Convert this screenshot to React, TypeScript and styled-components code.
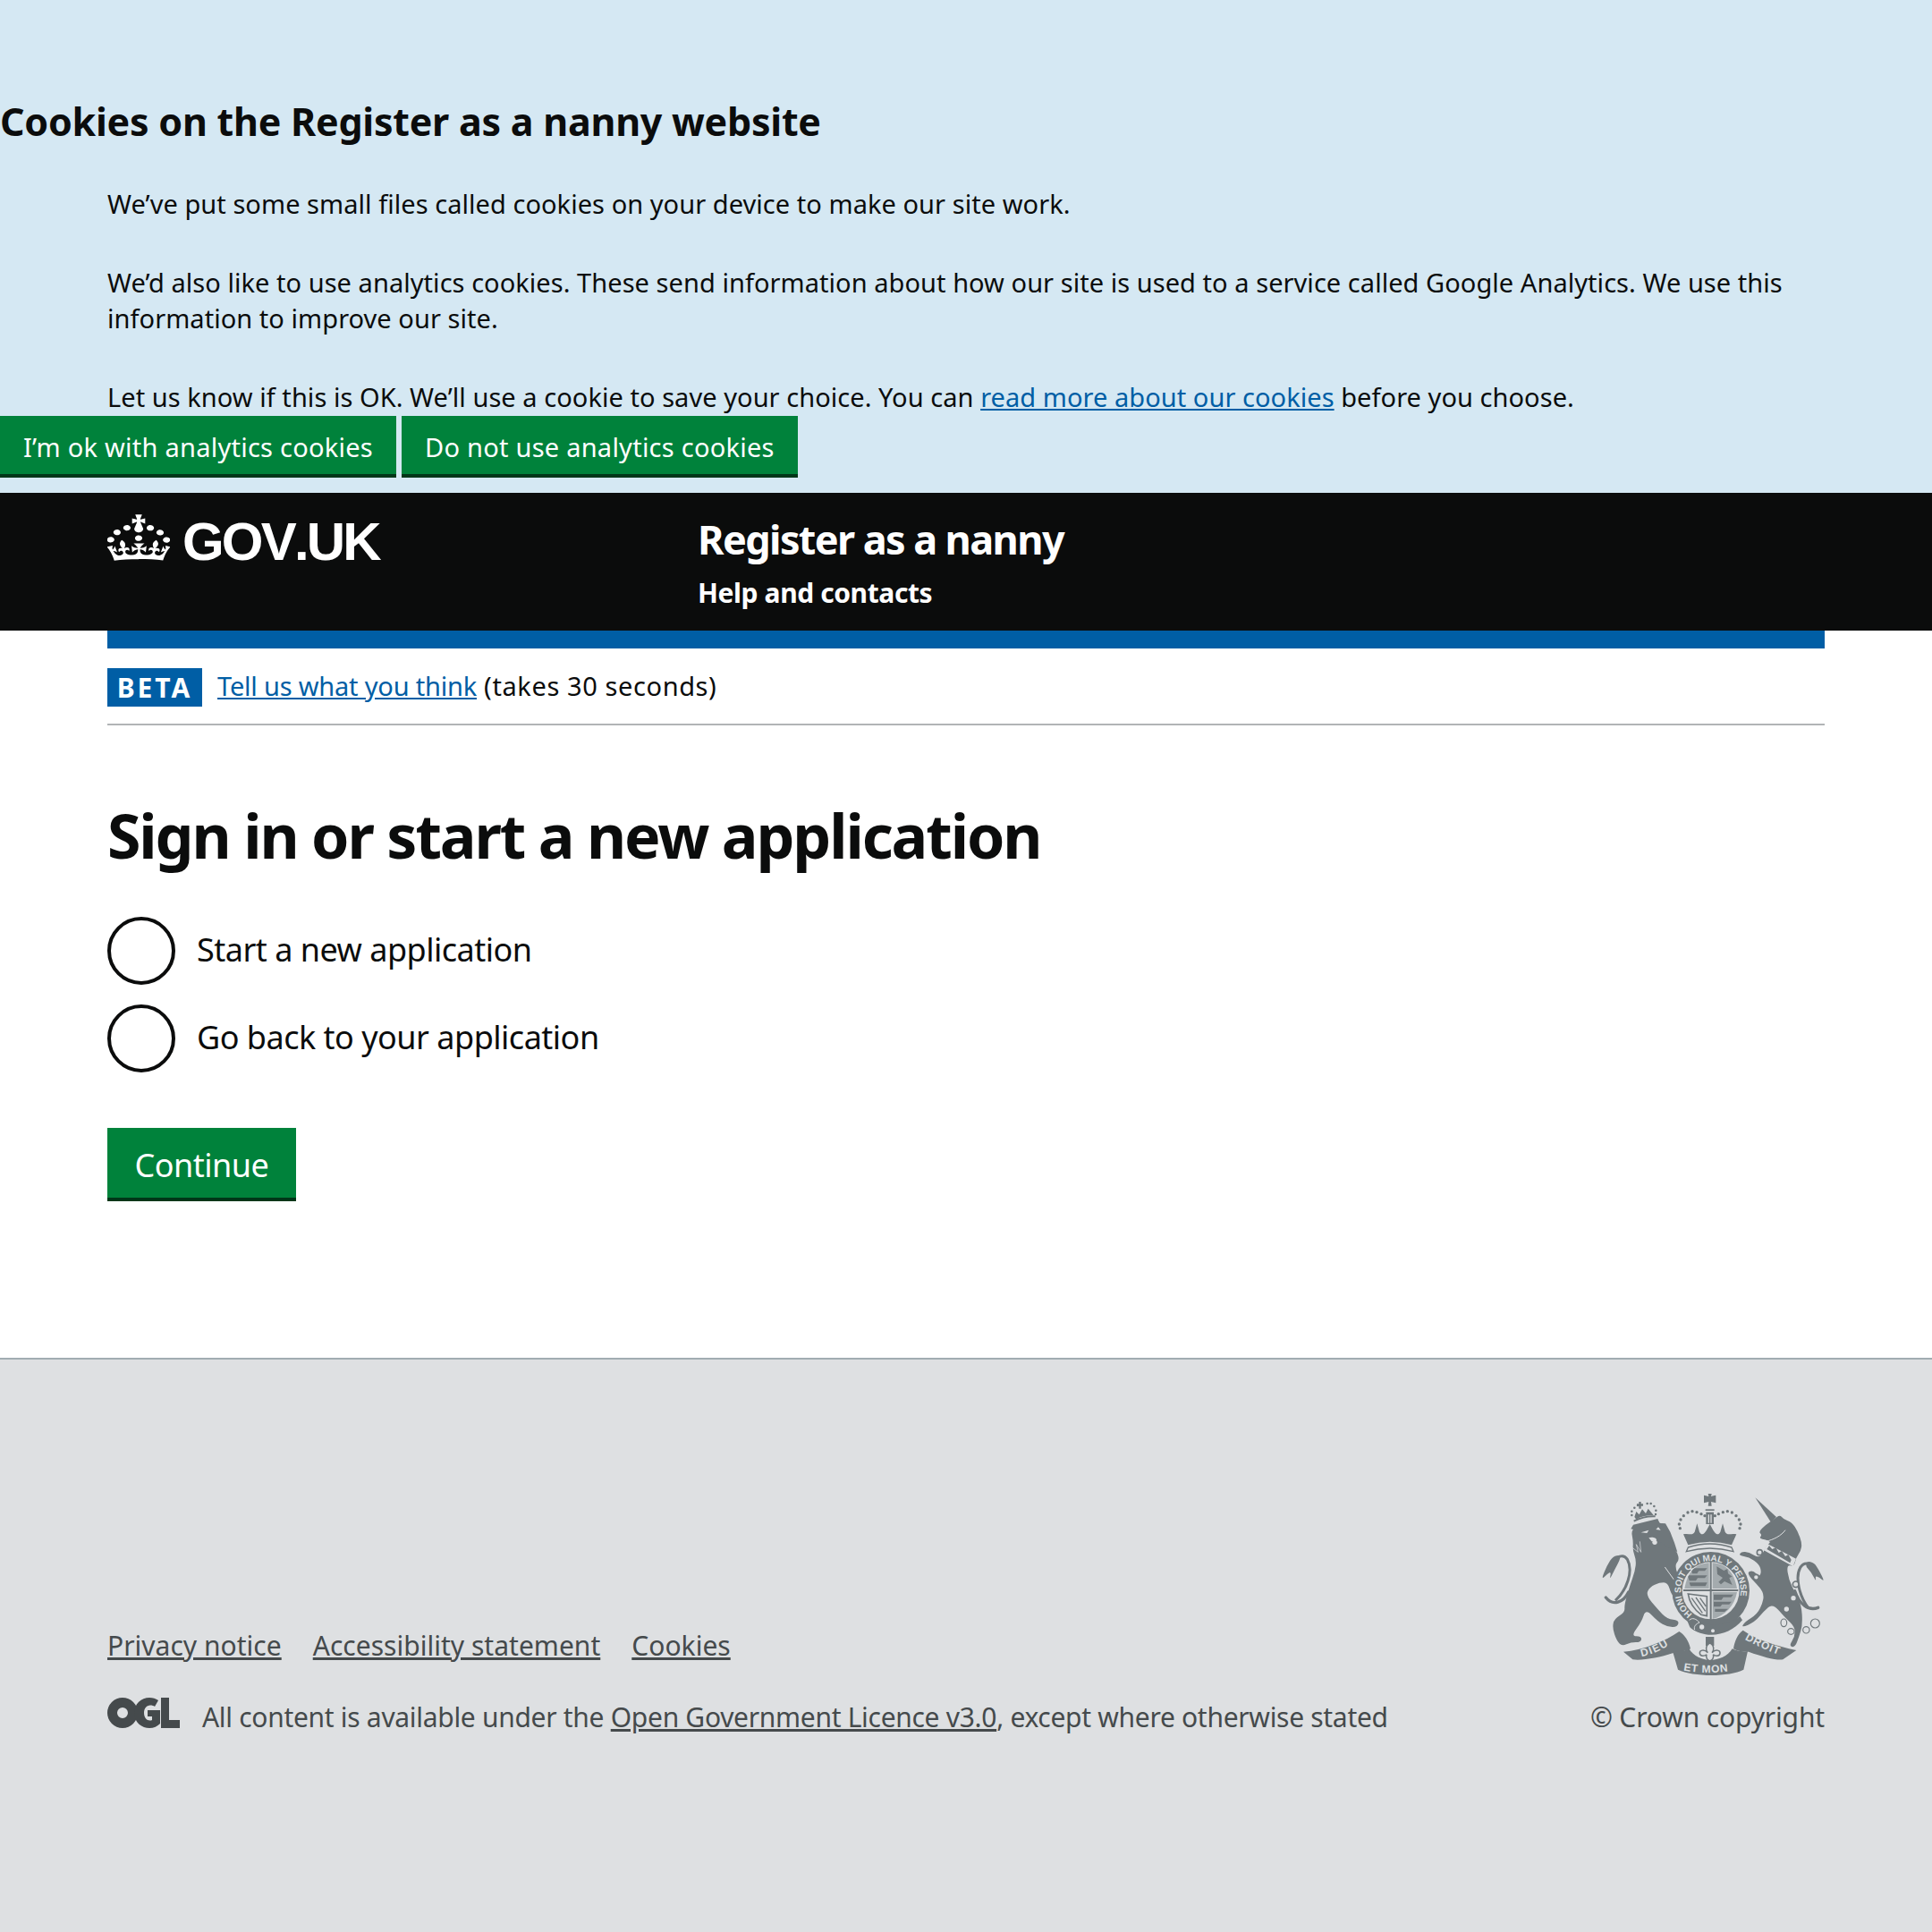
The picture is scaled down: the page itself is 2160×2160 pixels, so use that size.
import React from 'react';
import styled, { createGlobalStyle } from 'styled-components';

const Global = createGlobalStyle`
  html, body { margin: 0; padding: 0; background: #fff; }
  body { font-family: "Noto Sans", sans-serif; color: #0b0c0c; }
  * { box-sizing: border-box; }
`;
const Page = styled.div`display:flex;flex-direction:column;min-height:2160px;`;
const Banner = styled.section`background:#d5e8f3;height:551px;padding-top:104px;`;
const BannerTitle = styled.h2`margin:0 0 40px;font-size:43px;line-height:64px;font-weight:700;letter-spacing:-0.25px;`;
const BannerBody = styled.div`margin:0 120px;display:flex;flex-direction:column;gap:48px;`;
const BodyText = styled.p`margin:0;font-size:29px;line-height:40px;letter-spacing:0.05px;`;
const BlueLink = styled.a`color:#005ea5;text-decoration:underline;`;
const ButtonRow = styled.div`display:flex;gap:6px;margin-top:1px;`;
const GreenButton = styled.button<{$big?:boolean}>`
  font-family:inherit;border:0;border-radius:0;background:#00823b;color:#fff;
  box-shadow:0 4px 0 #003618;
  height:${p=>p.$big?78:65}px;margin-bottom:4px;
  padding:4px ${p=>p.$big?30.5:26}px 0;
  font-size:${p=>p.$big?36:29}px;letter-spacing:${p=>p.$big?-0.5:0.25}px;
`;
const Header = styled.header`background:#0b0c0c;height:154px;padding:0 120px;display:flex;`;
const LogoCol = styled.a`width:660px;height:100px;display:flex;align-items:flex-start;gap:14px;padding-top:24px;color:#fff;text-decoration:none;`;
const LogoText = styled.span`font-family:"Liberation Sans",sans-serif;font-weight:700;font-size:60px;line-height:52px;letter-spacing:-2.8px;font-kerning:none;margin-top:5px;`;
const ServiceCol = styled.div`display:flex;flex-direction:column;color:#fff;padding-top:26px;`;
const ServiceName = styled.a`font-size:45px;line-height:52px;font-weight:700;letter-spacing:-1.6px;`;
const ServiceNav = styled.a`font-size:30px;line-height:40px;margin-top:14px;font-weight:700;letter-spacing:-0.4px;`;
const Container = styled.div`margin:0 120px;`;
const BlueBar = styled.div`height:20px;background:#005ea5;`;
const Phase = styled.div`display:flex;align-items:center;gap:17px;height:86px;border-bottom:2px solid #b1b4b6;padding-top:2px;`;
const Tag = styled.strong`background:#005ea5;color:#fff;width:106px;height:43px;display:flex;align-items:center;justify-content:center;font-size:30px;letter-spacing:3px;font-weight:700;`;
const PhaseText = styled(BodyText)`letter-spacing:0.6px;margin-bottom:2px;`;
const PhaseLink = styled(BlueLink)`letter-spacing:-0.2px;`;
const Main = styled.main`padding-top:83px;height:707px;`;
const Title = styled.h1`margin:0 0 51px;font-size:68px;line-height:80px;font-weight:700;letter-spacing:-2.1px;`;
const Radios = styled.div`display:flex;flex-direction:column;gap:22px;`;
const RadioRow = styled.label`display:flex;align-items:center;gap:24px;height:76px;font-size:36px;letter-spacing:-0.5px;`;
const RadioCircle = styled.span`width:76px;height:76px;border-radius:50%;border:4px solid #0b0c0c;background:#fff;`;
const RadioText = styled.span`margin-bottom:3px;`;
const ContinueWrap = styled.div`margin-top:62px;`;
const Footer = styled.footer`flex:1;background:#dee0e2;border-top:2px solid #a1acb2;padding:150px 120px 0;color:#454a4c;`;
const FooterInner = styled.div`display:flex;justify-content:space-between;align-items:flex-end;`;
const FooterLeft = styled.div`display:flex;flex-direction:column;gap:40px;`;
const FooterLinks = styled.div`display:flex;gap:35px;font-size:30px;line-height:40px;letter-spacing:0.02px;`;
const FooterLink = styled.a`color:#454a4c;text-decoration:underline;`;
const Licence = styled.div`display:flex;align-items:flex-start;gap:25px;height:40px;font-size:30px;line-height:40px;letter-spacing:-0.3px;`;
const OglMark = styled.svg`margin-top:-2px;flex:none;`;
const FooterRight = styled.div`display:flex;flex-direction:column;align-items:flex-end;gap:27px;font-size:30px;line-height:40px;letter-spacing:-0.15px;`;
const CrestSvg = styled.svg`display:block;`;

const Crown = () => (
  <svg width="70" height="52" viewBox="0.2 -0.2 31.6 30.4" preserveAspectRatio="none" fill="currentColor">
    <path fillRule="evenodd" d="M22.6 10.4c-1 .4-2-.1-2.4-1-.4-.9.1-2 1-2.4.9-.4 2 .1 2.4 1s-.1 2-1 2.4m-5.9 6.7c-.9.4-2-.1-2.4-1-.4-.9.1-2 1-2.4.9-.4 2 .1 2.4 1s-.1 2-1 2.4m10.8-3.7c-1 .4-2-.1-2.4-1-.4-.9.1-2 1-2.4.9-.4 2 .1 2.4 1s0 2-1 2.4m3.3 4.8c-1 .4-2-.1-2.4-1-.4-.9.1-2 1-2.4.9-.4 2 .1 2.4 1s-.1 2-1 2.4M17 4.7l2.3 1.2V2.5l-2.3.7-.2-.2.9-3h-3.4l.9 3-.2.2c-.1.1-2.3-.7-2.3-.7v3.4L15 4.7c.1.1.1.2.2.2l-1.3 4c-.1.2-.1.4-.1.6 0 1.1.8 2 1.9 2.2h.7c1-.2 1.9-1.1 1.9-2.2 0-.2 0-.4-.1-.6l-1.3-4c-.1-.2 0-.2.1-.3m-7.6 5.7c.9.4 2-.1 2.4-1 .4-.9-.1-2-1-2.4-.9-.4-2 .1-2.4 1s0 2 1 2.4m-5 3c.9.4 2-.1 2.4-1 .4-.9-.1-2-1-2.4-.9-.4-2 .1-2.4 1s.1 2 1 2.4m-3.2 4.8c.9.4 2-.1 2.4-1 .4-.9-.1-2-1-2.4-.9-.4-2 .1-2.4 1s0 2 1 2.4m14.8 11c4.4 0 8.6.3 12.3.8 1.1-4.5 2.4-7 3.7-8.8l-2.5-.9c.2 1.3.3 1.9 0 2.7-.4-.4-.8-1.1-1.1-2.3l-1.2 4c.7-.5 1.3-.8 2-.9-1.1 2.5-2.6 3.1-3.5 3-1.1-.2-1.7-1.2-1.5-2.1.3-1.2 1.5-1.5 2.1-.1 1.1-2.3-.8-3-2-2.3 1.9-1.9 2.1-3.5.6-5.6-2.1 1.6-2.1 3.2-1.2 5.5-1.2-1.4-3.2-.6-2.5 1.6.9-1.4 2.1-.5 1.9.8-.2 1.1-1.7 2.1-3.5 1.9-2.7-.2-2.9-2.1-2.9-3.6.7-.1 1.9.5 2.9 1.9l.4-4.3c-1.1 1.1-2.1 1.4-3.2 1.4.4-1.2 2.1-3 2.1-3h-5.4s1.7 1.9 2.1 3c-1.1 0-2.1-.2-3.2-1.4l.4 4.3c1-1.4 2.2-2 2.9-1.9-.1 1.5-.2 3.4-2.9 3.6-1.9.2-3.4-.8-3.5-1.9-.2-1.3 1-2.2 1.9-.8.7-2.3-1.2-3-2.5-1.6.9-2.2.9-3.9-1.2-5.5-1.5 2-1.3 3.7.6 5.6-1.2-.7-3.1 0-2 2.3.6-1.4 1.8-1.1 2.1.1.2.9-.3 1.9-1.5 2.1-.9.2-2.4-.5-3.5-3 .6 0 1.2.3 2 .9l-1.2-4c-.3 1.1-.7 1.9-1.1 2.3-.3-.8-.2-1.4 0-2.7l-2.9.9C1.3 23 2.6 25.5 3.7 30c3.7-.5 7.9-.8 12.3-.8"/>
  </svg>
);

const Ogl = () => (
  <OglMark width="81" height="34" viewBox="0 0 81 34" fill="#454a4c">
    <path fillRule="evenodd" d="M17 0a17 17 0 1 0 0 34 17 17 0 0 0 0-34Zm0 11a6 6 0 1 1 0 12 6 6 0 0 1 0-12Z"/>
    <path d="M30 17C30 7 38 0 47 0c4 0 7 1 10 3l-4 7c-1-1-3-1.500-5-1.500C44 8.500 41 12 41 17s3 8.500 6.500 8.500c1 0 2 0 2.500-.5v-4h-5v-7h14v15c-3 3-7 5-12 5-8 0-17-6-17-17Z"/>
    <path d="M60 0h9v25h12v9H60Z"/>
  </OglMark>
);

const C = '#6f777b';
const BG = '#dee0e2';
const MID = '#a4abae';

const smooth = (s: string) => {
  const p = s.trim().split(/\s+/).map(q => q.split(',').map(Number));
  const mid = (a: number[], b: number[]) => [(a[0] + b[0]) / 2, (a[1] + b[1]) / 2];
  const start = mid(p[p.length - 1], p[0]);
  let d = `M${start[0]} ${start[1]}`;
  p.forEach((pt, i) => {
    const m = mid(pt, p[(i + 1) % p.length]);
    d += ` Q${pt[0]} ${pt[1]} ${m[0]} ${m[1]}`;
  });
  return d + ' Z';
};
const dots = (pts: number[][], r: number) => pts.map(([x, y], i) => <circle key={i} cx={x} cy={y} r={r} />);
const mirror = (pts: number[][]) => pts.map(([x, y]) => [730 - x, y]);

const archLeft = [[265,116],[262,102],[267,87],[277,74],[291,63],[306,59],[321,62],[336,68],[348,74]];
const lionCrownDots = [[103,72],[103,59],[112,47],[123,39],[155,33],[167,33],[178,42],[184,56],[183,69]];

const LION = '100,118 140,108 190,84 196,100 216,100 212,118 232,128 226,146 246,164 240,180 256,196 262,224 246,240 268,300 280,340 258,352 236,340 224,298 196,298 164,312 150,340 190,388 222,420 262,424 256,448 222,446 190,428 150,386 136,430 100,478 136,478 134,498 100,498 70,512 52,492 38,450 44,420 80,398 78,372 96,310 114,260 118,222 106,190 108,160';
const UNICORN = '580,86 600,70 612,86 640,96 660,126 674,166 670,192 654,214 648,244 622,238 630,290 650,330 672,372 676,440 664,480 650,516 630,510 650,480 650,446 618,416 576,368 546,394 516,430 470,450 482,430 524,404 542,366 546,340 536,318 486,266 510,256 530,280 538,262 530,236 496,212 462,208 470,194 496,196 530,216 546,194 556,172 570,162 552,154 530,150 540,138 528,128 552,104';

const Crest = () => (
  <CrestSvg width="250" height="203" viewBox="0 0 750 609" fill={C}>
    <defs>
      <path id="garter-motto" d="M306 404 A100 100 0 1 1 418 412" />
      <path id="rib-l" d="M136 546 C170 540 210 522 246 494" />
      <path id="rib-c" d="M276 592 C330 603 400 603 456 590" />
      <path id="rib-r" d="M482 488 C520 510 565 530 612 546" />
      <clipPath id="q1"><path d="M362 232 C320 234 290 260 280 318 H362 Z" /></clipPath>
      <clipPath id="q2"><path d="M374 232 C416 234 446 260 456 318 H374 Z" /></clipPath>
      <clipPath id="q4"><path d="M374 330 H456 C448 376 415 410 374 420 Z" /></clipPath>
    </defs>

    {/* lion tail */}
    <path d="M92 330 C75 365 40 378 16 348" fill="none" stroke={C} strokeWidth="10" strokeLinecap="round" />
    <path d="M48 358 C85 325 110 260 88 220 C75 200 50 210 38 232" fill="none" stroke={C} strokeWidth="9" />
    <path d={smooth('66,206 40,210 20,240 0,290 22,268 34,262 28,290 48,250 62,224')} />
    {/* lion */}
    <path d={smooth(LION)} />
    <path d="M100 118 L108 104 L190 84 L196 100 L216 100 L232 128 L246 164 L256 196 L210 170 L150 130 Z" />
    <path d="M134 130 L160 122 L154 132 Z M192 112 L184 120 L200 122 Z" fill={BG} />
    <path d="M160 148 C172 144 186 148 186 156 L170 160 Z" fill={BG} />
    <circle cx="180" cy="163" r="8" fill={BG} />
    <path d="M214 246 L276 332" stroke={BG} strokeWidth="3" />
    <path d="M104 180 L124 196 L118 170 L134 196 L130 160" stroke={BG} strokeWidth="2" fill="none" />
    {/* lion crown */}
    {dots(lionCrownDots, 3.800)}
    <path d="M127 27 h7 v7 h7 v7 h-7 v9 h-7 v-9 h-7 v-7 h7 Z" />
    <path d="M112 78 L118 60 L128 70 L138 52 L150 66 L158 50 L168 62 L176 72 Q140 72 118 86 Z" />
    <path d="M110 92 Q145 74 182 76" stroke={C} strokeWidth="6" fill="none" />

    {/* central crown */}
    <path d="M359 0 h12 l-2 9 l8 -2 l8 -2 v26 l-16 -4 l2 14 h-12 l2 -14 l-16 4 v-26 l16 4 Z" />
    <path d="M350 52 h30 v5 h-30 Z" />
    <path d="M352 62 h26 v40 h-26 Z" />
    <path d="M359 70 h4 v28 h-4 Z M367 70 h4 v28 h-4 Z" fill={BG} />
    {dots(archLeft, 5)}
    {dots(mirror(archLeft), 5)}
    <path d="M276 136 C296 132 306 142 314 128 L322 100 L330 128 C338 142 346 135 354 122 L365 102 L376 122 C384 135 392 142 400 128 L408 100 L416 128 C424 142 434 132 454 136 L438 172 Q365 150 292 172 Z" />
    <path d="M292 180 Q365 156 438 180 L444 194 Q365 172 286 194 Z" fill={BG} stroke={C} strokeWidth="4" />

    {/* shield and garter */}
    <circle cx="368" cy="325" r="130" />
    <circle cx="368" cy="325" r="96" fill={BG} />
    <text fontFamily="Liberation Sans, sans-serif" fontWeight="700" fontSize="30" fill={BG}>
      <textPath href="#garter-motto">HONI SOIT QUI MAL Y PENSE</textPath>
    </text>
    <path d="M368 228 V425 M276 324 H460" stroke={C} strokeWidth="6" />
    <path d="M362 232 C320 234 290 260 280 318 H362 Z" fill={MID} />
    <path d="M374 232 C416 234 446 260 456 318 H374 Z" fill={MID} />
    <path d="M374 330 H456 C448 376 415 410 374 420 Z" fill={MID} />
    <g clipPath="url(#q1)">
      <path d="M300 250 h56 l-8 9 h-20 l-6 9 h-16 Z M290 274 h66 l-8 9 h-24 l-6 9 h-22 Z M296 298 h60 l-6 12 h-50 Z" />
    </g>
    <g clipPath="url(#q2)">
      <path d="M388 244 l24 14 l12 -6 l2 16 l14 10 l-10 4 l10 24 l-26 -12 l-12 10 l-8 -8 l14 -14 l-18 -12 Z" />
    </g>
    <g clipPath="url(#q4)">
      <path d="M378 338 h66 l-8 9 h-26 l-6 9 h-26 Z M378 362 h60 l-8 9 h-24 l-6 8 h-22 Z M382 386 h44 l-12 10 h-32 Z" />
    </g>
    <path d="M292 336 L355 344 V410 L336 406 C312 388 296 365 292 336 Z" fill={BG} stroke={C} strokeWidth="5" />
    <path d="M304 350 L340 400 M318 348 L350 394 M332 350 L352 378" stroke={C} strokeWidth="4" />

    {/* garter buckle */}
    <path d="M290 428 C305 408 325 425 340 432 C380 448 430 436 466 412 L474 424 C445 458 405 476 360 473 C335 471 310 460 298 448 Z" />
    <path d="M296 424 C306 414 320 420 330 432 C318 436 310 446 314 456" fill="none" stroke={BG} strokeWidth="3" />
    <circle cx="338" cy="447" r="8" fill={BG} />
    <circle cx="375" cy="460" r="6" fill={BG} />

    {/* fleur */}
    <path d="M351 480 h28 v30 h-28 Z" />
    <path d="M365 500 C380 510 380 525 372 533 C385 520 400 525 399 535 C398 547 382 545 376 539 C380 550 372 560 365 560 C358 560 350 550 354 539 C348 545 332 547 331 535 C330 525 345 520 358 533 C350 525 350 510 365 500 Z" fill={BG} stroke={C} strokeWidth="4.500" />

    {/* ribbon */}
    <path d="M75 530 C140 525 215 495 262 462 C280 472 295 495 300 520 C285 530 262 530 240 535 C195 550 140 560 106 556 Z" />
    <path d="M655 525 C590 510 520 490 476 458 C458 470 448 495 444 520 C460 530 480 530 495 530 C545 548 590 560 610 556 Z" />
    <path d="M240 528 C262 530 285 528 295 520 C310 545 340 558 365 558 C395 558 425 545 440 520 C455 528 475 530 492 528 L478 590 C430 615 310 615 258 590 Z" />
    <g fontFamily="Liberation Sans, sans-serif" fontWeight="700" fill={BG}>
      <text fontSize="36" letterSpacing="4"><textPath href="#rib-l">DIEU</textPath></text>
      <text fontSize="36" letterSpacing="2"><textPath href="#rib-c">ET MON</textPath></text>
      <text fontSize="36" letterSpacing="3"><textPath href="#rib-r">DROIT</textPath></text>
    </g>

    {/* unicorn */}
    <path d="M650 326 C665 370 695 395 728 382" fill="none" stroke={C} strokeWidth="10" strokeLinecap="round" />
    <path d="M696 384 C665 345 650 280 668 248 C682 226 705 232 720 254" fill="none" stroke={C} strokeWidth="9" />
    <path d={smooth('690,226 715,232 732,258 750,296 732,280 718,276 722,296 704,262 686,244')} />
    <path d="M517 13 L588 78 L570 96 Z" />
    <path d={smooth(UNICORN)} />
    <path d="M552 160 C580 154 605 140 618 122" fill="none" stroke={BG} strokeWidth="3" />
    <path d="M546 190 L558 168 L654 218 L644 244 Z" fill={BG} />
    <path d="M556 186 L564 174 L574 186 L586 180 L596 198 L606 192 L618 210 L628 204 L638 222 L634 232 Z" />
    <circle cx="532" cy="197" r="9" fill={BG} stroke={C} strokeWidth="5" />
    <circle cx="520" cy="280" r="9" fill={BG} stroke={C} strokeWidth="5" />
    <circle cx="653" cy="304" r="10" fill={BG} stroke={C} strokeWidth="5" />
    <circle cx="645" cy="350" r="8" fill={BG} />
    <circle cx="622" cy="387" r="8" fill={BG} />
    <g fill="none" stroke={C} strokeWidth="3.500">
      <ellipse cx="613" cy="433" rx="10" ry="13" />
      <ellipse cx="637" cy="462" rx="11" ry="10" />
      <circle cx="688" cy="457" r="11" />
      <circle cx="718" cy="435" r="15" />
    </g>
  </CrestSvg>
);

export default function App() {
  return (
    <Page>
      <Global />
      <Banner>
        <BannerTitle>Cookies on the Register as a nanny website</BannerTitle>
        <BannerBody>
          <BodyText>We’ve put some small files called cookies on your device to make our site work.</BodyText>
          <BodyText>We’d also like to use analytics cookies. These send information about how our site is used to a service called Google Analytics. We use this information to improve our site.</BodyText>
          <BodyText>Let us know if this is OK. We’ll use a cookie to save your choice. You can <BlueLink href="#">read more about our cookies</BlueLink> before you choose.</BodyText>
        </BannerBody>
        <ButtonRow>
          <GreenButton>I’m ok with analytics cookies</GreenButton>
          <GreenButton>Do not use analytics cookies</GreenButton>
        </ButtonRow>
      </Banner>
      <Header>
        <LogoCol href="#"><Crown /><LogoText>GOV.UK</LogoText></LogoCol>
        <ServiceCol>
          <ServiceName>Register as a nanny</ServiceName>
          <ServiceNav>Help and contacts</ServiceNav>
        </ServiceCol>
      </Header>
      <Container>
        <BlueBar />
        <Phase>
          <Tag>BETA</Tag>
          <PhaseText><PhaseLink href="#">Tell us what you think</PhaseLink> (takes 30 seconds)</PhaseText>
        </Phase>
        <Main>
          <Title>Sign in or start a new application</Title>
          <Radios>
            <RadioRow><RadioCircle /><RadioText>Start a new application</RadioText></RadioRow>
            <RadioRow><RadioCircle /><RadioText>Go back to your application</RadioText></RadioRow>
          </Radios>
          <ContinueWrap><GreenButton $big>Continue</GreenButton></ContinueWrap>
        </Main>
      </Container>
      <Footer>
        <FooterInner>
          <FooterLeft>
            <FooterLinks>
              <FooterLink href="#">Privacy notice</FooterLink>
              <FooterLink href="#">Accessibility statement</FooterLink>
              <FooterLink href="#">Cookies</FooterLink>
            </FooterLinks>
            <Licence><Ogl /><span>All content is available under the <FooterLink href="#">Open Government Licence v3.0</FooterLink>, except where otherwise stated</span></Licence>
          </FooterLeft>
          <FooterRight><Crest /><span>© Crown copyright</span></FooterRight>
        </FooterInner>
      </Footer>
    </Page>
  );
}
